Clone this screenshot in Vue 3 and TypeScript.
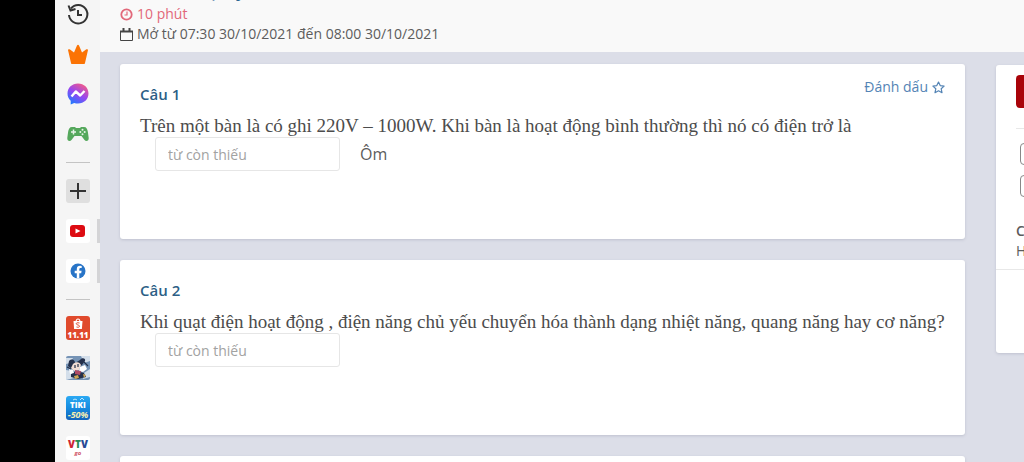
<script setup lang="ts">
interface Question {
  id: number
  text: string
  unit?: string
  markable?: boolean
}

const questions: Question[] = [
  {
    id: 1,
    text: 'Trên một bàn là có ghi 220V – 1000W. Khi bàn là hoạt động bình thường thì nó có điện trở là',
    unit: 'Ôm',
    markable: true,
  },
  {
    id: 2,
    text: 'Khi quạt điện hoạt động , điện năng chủ yếu chuyển hóa thành dạng nhiệt năng, quang năng hay cơ năng?',
  },
]
</script>

<template>
  <div class="screen">
    <nav class="rail" aria-label="Browser sidebar">
      <button class="slot" aria-label="History">
        <svg width="24" height="24" viewBox="0 0 24 24" fill="none" stroke="#333" stroke-width="2">
          <path d="M5 6.5A9.2 9.2 0 1 1 3 13" />
          <path d="M2.5 3.5 4.5 8.5 9.5 7" />
          <path d="M12 8v5h4" />
        </svg>
      </button>
      <button class="slot" aria-label="Rewards">
        <svg width="24" height="24" viewBox="0 0 24 24">
          <path fill="#fb7304" d="M2 8c0-1 1-1 2-.5l4 3 3-7c.5-1 1.500-1 2 0l3 7 4-3c1-.5 2-.5 2 .5l-3 13c0 .7-.6 1-1.200 1H6.200c-.7 0-1.200-.3-1.200-1z" />
        </svg>
      </button>
      <button class="slot" aria-label="Messenger">
        <svg width="24" height="24" viewBox="0 0 24 24">
          <defs>
            <linearGradient id="messenger" x1="0.2" y1="1" x2="0.8" y2="0">
              <stop offset="0" stop-color="#187dff" />
              <stop offset="0.5" stop-color="#9646f2" />
              <stop offset="1" stop-color="#fa5d81" />
            </linearGradient>
          </defs>
          <path fill="url(#messenger)" d="M12 1.500C6 1.500 1.500 5.800 1.500 11.500c0 3 1.200 5.500 3.200 7.300v3.700l3.500-1.600c1.200.4 2.500.6 3.800.6 6 0 10.500-4.300 10.500-10S18 1.500 12 1.500z" />
          <path fill="none" stroke="#fff" stroke-width="2.400" stroke-linejoin="round" d="m5.500 14.500 4.300-5 4.400 4 4.300-4.500" />
        </svg>
      </button>
      <button class="slot" aria-label="Games">
        <svg width="24" height="24" viewBox="0 0 24 24">
          <path fill="#55a85c" d="M6 5h3l1 1h4l1-1h3c2.500 0 3.400 2 3.900 5l.8 6c.3 3-2.700 4-4.400 1.700L15.500 14h-7l-2.800 3.700C4 20 1 19 1.300 16l.8-6C2.600 7 3.500 5 6 5z" />
          <path stroke="#e8f4e8" stroke-width="1.500" d="M7.500 7.500v5M5 10h5" />
          <g fill="#e8f4e8"><circle cx="16.500" cy="7.800" r="1" /><circle cx="16.500" cy="12.200" r="1" /><circle cx="14.300" cy="10" r="1" /><circle cx="18.700" cy="10" r="1" /></g>
        </svg>
      </button>
      <hr class="rule" />
      <button class="slot" aria-label="Add">
        <svg width="24" height="24" viewBox="0 0 24 24">
          <rect width="24" height="24" rx="3" fill="#dfdfdf" />
          <path stroke="#333" stroke-width="2" d="M12 4v16M4 12h16" />
        </svg>
      </button>
      <button class="slot open" aria-label="YouTube">
        <svg width="24" height="24" viewBox="0 0 24 24">
          <rect width="24" height="24" rx="3" fill="#fff" />
          <rect x="4" y="6" width="15" height="12" rx="3" fill="#dd0b12" />
          <path fill="#fff" d="m9.500 9.500 5 2.500-5 2.500z" />
        </svg>
      </button>
      <button class="slot open" aria-label="Facebook">
        <svg width="24" height="24" viewBox="0 0 24 24">
          <rect width="24" height="24" rx="3" fill="#fff" />
          <circle cx="12" cy="12" r="7.500" fill="#2874c7" />
          <path fill="#fff" d="M10.800 19.500v-5.300H8.700v-2.400h2.100v-1.700c0-2.200 1.300-3.300 3.200-3.300l1.700.1v2.100h-1c-1.100 0-1.400.6-1.400 1.300v1.500h2.300l-.4 2.400h-1.900v5.300z" />
        </svg>
      </button>
      <hr class="rule" />
      <button class="slot" aria-label="Shopee">
        <svg width="24" height="24" viewBox="0 0 24 24">
          <rect width="24" height="24" rx="3" fill="#e04a2c" />
          <path fill="none" stroke="#fff" stroke-width="1.200" d="M10 6c0-4 4-4 4 0" />
          <path fill="#fff" d="M7.500 5h9l-.6 8H8.100z" />
          <path fill="none" stroke="#e04a2c" stroke-width="1" d="M13.500 7c-4-1-4 1.500-1.500 2s2 3-1.500 2" />
          <text x="12" y="22" text-anchor="middle" class="shop">11.11</text>
        </svg>
      </button>
      <button class="slot" aria-label="Game">
        <svg width="24" height="24" viewBox="0 0 24 24">
          <rect width="24" height="24" rx="2" fill="#7593b5" />
          <path fill="#d3deea" d="M0 2h7l-3 5-4 1zM15 0h9v5l-6 2zM0 14l6 1 2 7-8 2zM18 17l6-4v8l-7 2z" />
          <path fill="#24304b" d="M3 5c3-3 6-1 6 2l5-3c2-3 6-2 5 1l-3 4-4 3-6 1-4-3zM5 18l5-3 8 2 2 4-8 2-7-2z" />
          <path fill="#f0dcd4" d="M7 8c3-3 7-2 8 1l-2 5-5 1-3-3z" />
          <path fill="#fff" d="m14 11 5-2 2 4-4 3-4-1zM3 13l4 1 1 3-4 1z" />
          <path fill="#b04b66" d="m9 14 6 1-1 4-5-1z" />
          <path stroke="#22304a" stroke-width="1.200" d="M9 9v3M12 8v3M18 6l4 4M1 11l4 2" />
          <path fill="#d0a552" d="m8 20 4-1 1 3-4 1zM17 18l3 1-2 3z" />
        </svg>
      </button>
      <button class="slot" aria-label="Tiki">
        <svg width="24" height="24" viewBox="0 0 24 24">
          <defs>
            <linearGradient id="tiki" x1="0" y1="0" x2="0" y2="1">
              <stop offset="0" stop-color="#2ba9f3" />
              <stop offset="0.5" stop-color="#168ce0" />
              <stop offset="1" stop-color="#1263bb" />
            </linearGradient>
          </defs>
          <rect width="24" height="24" rx="3" fill="url(#tiki)" />
          <path fill="none" stroke="#bde8ff" d="m7 4 2-1 2 1M14 4l2-2 2 2" />
          <text x="12" y="12" text-anchor="middle" class="tiki">TIKI</text>
          <text x="12" y="22" text-anchor="middle" class="sale">-50%</text>
        </svg>
      </button>
      <button class="slot" aria-label="VTV Go">
        <svg width="24" height="24" viewBox="0 0 24 24">
          <rect width="24" height="24" rx="3" fill="#fff" />
          <text x="12" y="12" text-anchor="middle" class="vtv"><tspan fill="#cf2535">V</tspan><tspan fill="#288a55">T</tspan><tspan fill="#294b96">V</tspan></text>
          <text x="12" y="19" text-anchor="middle" class="go">go</text>
        </svg>
      </button>
    </nav>

    <div class="page">
      <header class="top">
        <h1 class="title">Kiểm tra Vật lý</h1>
        <p class="info time">
          <svg width="13" height="13" viewBox="0 0 13 13" fill="none" stroke="currentColor">
            <circle cx="6.500" cy="6.500" r="5.200" stroke-width="1.800" />
            <path stroke-width="1.200" d="M7 3.500v3.500H4.500" />
          </svg>
          10 phút
        </p>
        <p class="info">
          <svg width="13" height="13" viewBox="0 0 13 13" fill="none" stroke="#444">
            <path d="M.5 3.500h12v9H.5z" />
            <path stroke-width="2" d="M0 3.500h13" />
            <path stroke-width="2" d="M3.500 0v3M9.500 0v3" />
          </svg>
          Mở từ 07:30 30/10/2021 đến 08:00 30/10/2021
        </p>
      </header>

      <div class="body">
        <main class="questions">
          <section v-for="q in questions" :key="q.id" class="card">
            <div class="head">
              <h2 class="number">Câu {{ q.id }}</h2>
              <a v-if="q.markable" href="#" class="mark">
                Đánh dấu
                <svg width="13" height="13" viewBox="0 0 13 13" fill="none" stroke="currentColor" stroke-width="1.200" stroke-linejoin="round">
                  <path d="m6.500 1 1.700 3.600 3.900.5-2.900 2.700.8 3.900-3.500-1.900L3 11.700l.8-3.900L.9 5.100l3.900-.5z" />
                </svg>
              </a>
            </div>
            <label class="text" :for="`answer-${q.id}`">{{ q.text }}</label>
            <div class="answer">
              <input :id="`answer-${q.id}`" type="text" class="blank" placeholder="từ còn thiếu" />
              <span v-if="q.unit" class="unit">{{ q.unit }}</span>
            </div>
          </section>
          <section class="card"></section>
        </main>

        <aside class="side">
          <div class="panel">
            <div class="actions">
              <button class="submit" aria-label="Submit"></button>
            </div>
            <div class="checks">
              <input type="checkbox" class="check" aria-label="Question 1" />
              <input type="checkbox" class="check" aria-label="Question 2" />
            </div>
            <div class="legend">
              <strong>C</strong>
              <span>H</span>
            </div>
          </div>
        </aside>
      </div>
    </div>
  </div>
</template>

<style>
body {
  margin: 0;
  background: #000;
}
</style>

<style scoped>
.screen {
  display: flex;
  height: 100vh;
  overflow: hidden;
  padding-left: 55px;
  box-sizing: border-box;
  font-family: "Open Sans", "Noto Sans", sans-serif;
  font-size: 14px;
  line-height: 20px;
  color: #5c5c5c;
}
.rail {
  flex: 0 0 45px;
  background: #f5f5f5;
  display: flex;
  flex-direction: column;
  box-sizing: border-box;
}
.slot {
  flex: 0 0 40px;
  display: flex;
  align-items: center;
  justify-content: center;
  padding: 0;
  border: 0;
  background: none;
}
.slot:first-child {
  margin-top: -6px;
}
.slot.open {
  background: linear-gradient(#d4d4d6, #d4d4d6) right center / 3px 24px no-repeat;
}
.rule {
  flex: 0 0 1px;
  width: 24px;
  margin: 8px auto;
  border: 0;
  background: #c4c4c4;
}
.shop {
  font: 800 8px "Open Sans", sans-serif;
  fill: #fff;
}
.tiki {
  font: 800 8px "Open Sans", sans-serif;
  fill: #fff;
}
.sale {
  font: italic 700 9px "Open Sans", sans-serif;
  fill: #f6efb0;
}
.vtv {
  font: 800 10px "Open Sans", sans-serif;
}
.go {
  font: italic 700 6px "Open Sans", sans-serif;
  fill: #d0556a;
}
.page {
  flex: 1;
  min-width: 0;
  background: #dcdee8;
}
.top {
  background: #f9f9f9;
  padding: 0 20px 8px;
  display: flow-root;
}
.title {
  margin: -21px 0 0;
  padding-bottom: 1px;
  font-size: 17px;
  line-height: 24px;
  font-weight: 700;
  color: #2c6894;
}
.info {
  display: flex;
  align-items: center;
  gap: 4px;
  margin: 0;
}
.time {
  color: #e2687a;
}
.body {
  display: flex;
  gap: 31px;
  padding: 12px 0 0 20px;
}
.questions {
  flex: 1;
  min-width: 0;
  display: flex;
  flex-direction: column;
  gap: 21px;
}
.card {
  box-sizing: border-box;
  min-height: 175px;
  padding: 13px 20px;
  background: #fff;
  border-radius: 3px;
  box-shadow: 0 1px 3px #bfc2cf;
}
.head {
  display: flex;
  justify-content: space-between;
  align-items: flex-start;
}
.number {
  margin: 7px 0 0;
  font-size: 15px;
  line-height: 20px;
  font-weight: 600;
  color: #2d5f86;
}
.mark {
  display: flex;
  align-items: center;
  gap: 4px;
  color: #5484b5;
  text-decoration: none;
}
.text {
  display: block;
  margin-top: 11px;
  font-family: "Liberation Serif", serif;
  font-size: 19px;
  line-height: 22px;
  color: #4c4c4c;
}
.answer {
  display: flex;
  align-items: center;
  gap: 20px;
  margin-left: 15px;
}
.blank {
  box-sizing: border-box;
  width: 185px;
  height: 34px;
  padding: 0 12px;
  border: 1px solid #e6e6e6;
  border-radius: 3px;
  background: none;
  font: inherit;
}
.blank::placeholder {
  color: #a2a2a2;
  opacity: 1;
}
.unit {
  font-size: 16px;
}
.side {
  flex: 0 0 28px;
  min-width: 0;
}
.panel {
  box-sizing: border-box;
  width: 280px;
  min-height: 288px;
  margin-top: 1px;
  padding-top: 10px;
  background: #fff;
  border-radius: 3px;
  box-shadow: 0 1px 3px #bfc2cf;
}
.actions {
  margin: 0 20px;
  padding-bottom: 20px;
  border-bottom: 1px solid #e8e8e8;
}
.submit {
  display: block;
  width: 100%;
  height: 33px;
  border: 0;
  border-radius: 4px;
  background: #a90309;
}
.checks {
  display: flex;
  flex-direction: column;
  gap: 10px;
  padding: 14px 24px 24px;
}
.check {
  appearance: none;
  width: 22px;
  height: 22px;
  margin: 0;
  border: 1px solid #888;
  border-radius: 4px;
  background: #fff;
}
.legend {
  display: flex;
  flex-direction: column;
  padding: 0 20px 8px;
  border-bottom: 1px solid #e8e8e8;
}
.legend strong {
  font-weight: 600;
}
</style>
